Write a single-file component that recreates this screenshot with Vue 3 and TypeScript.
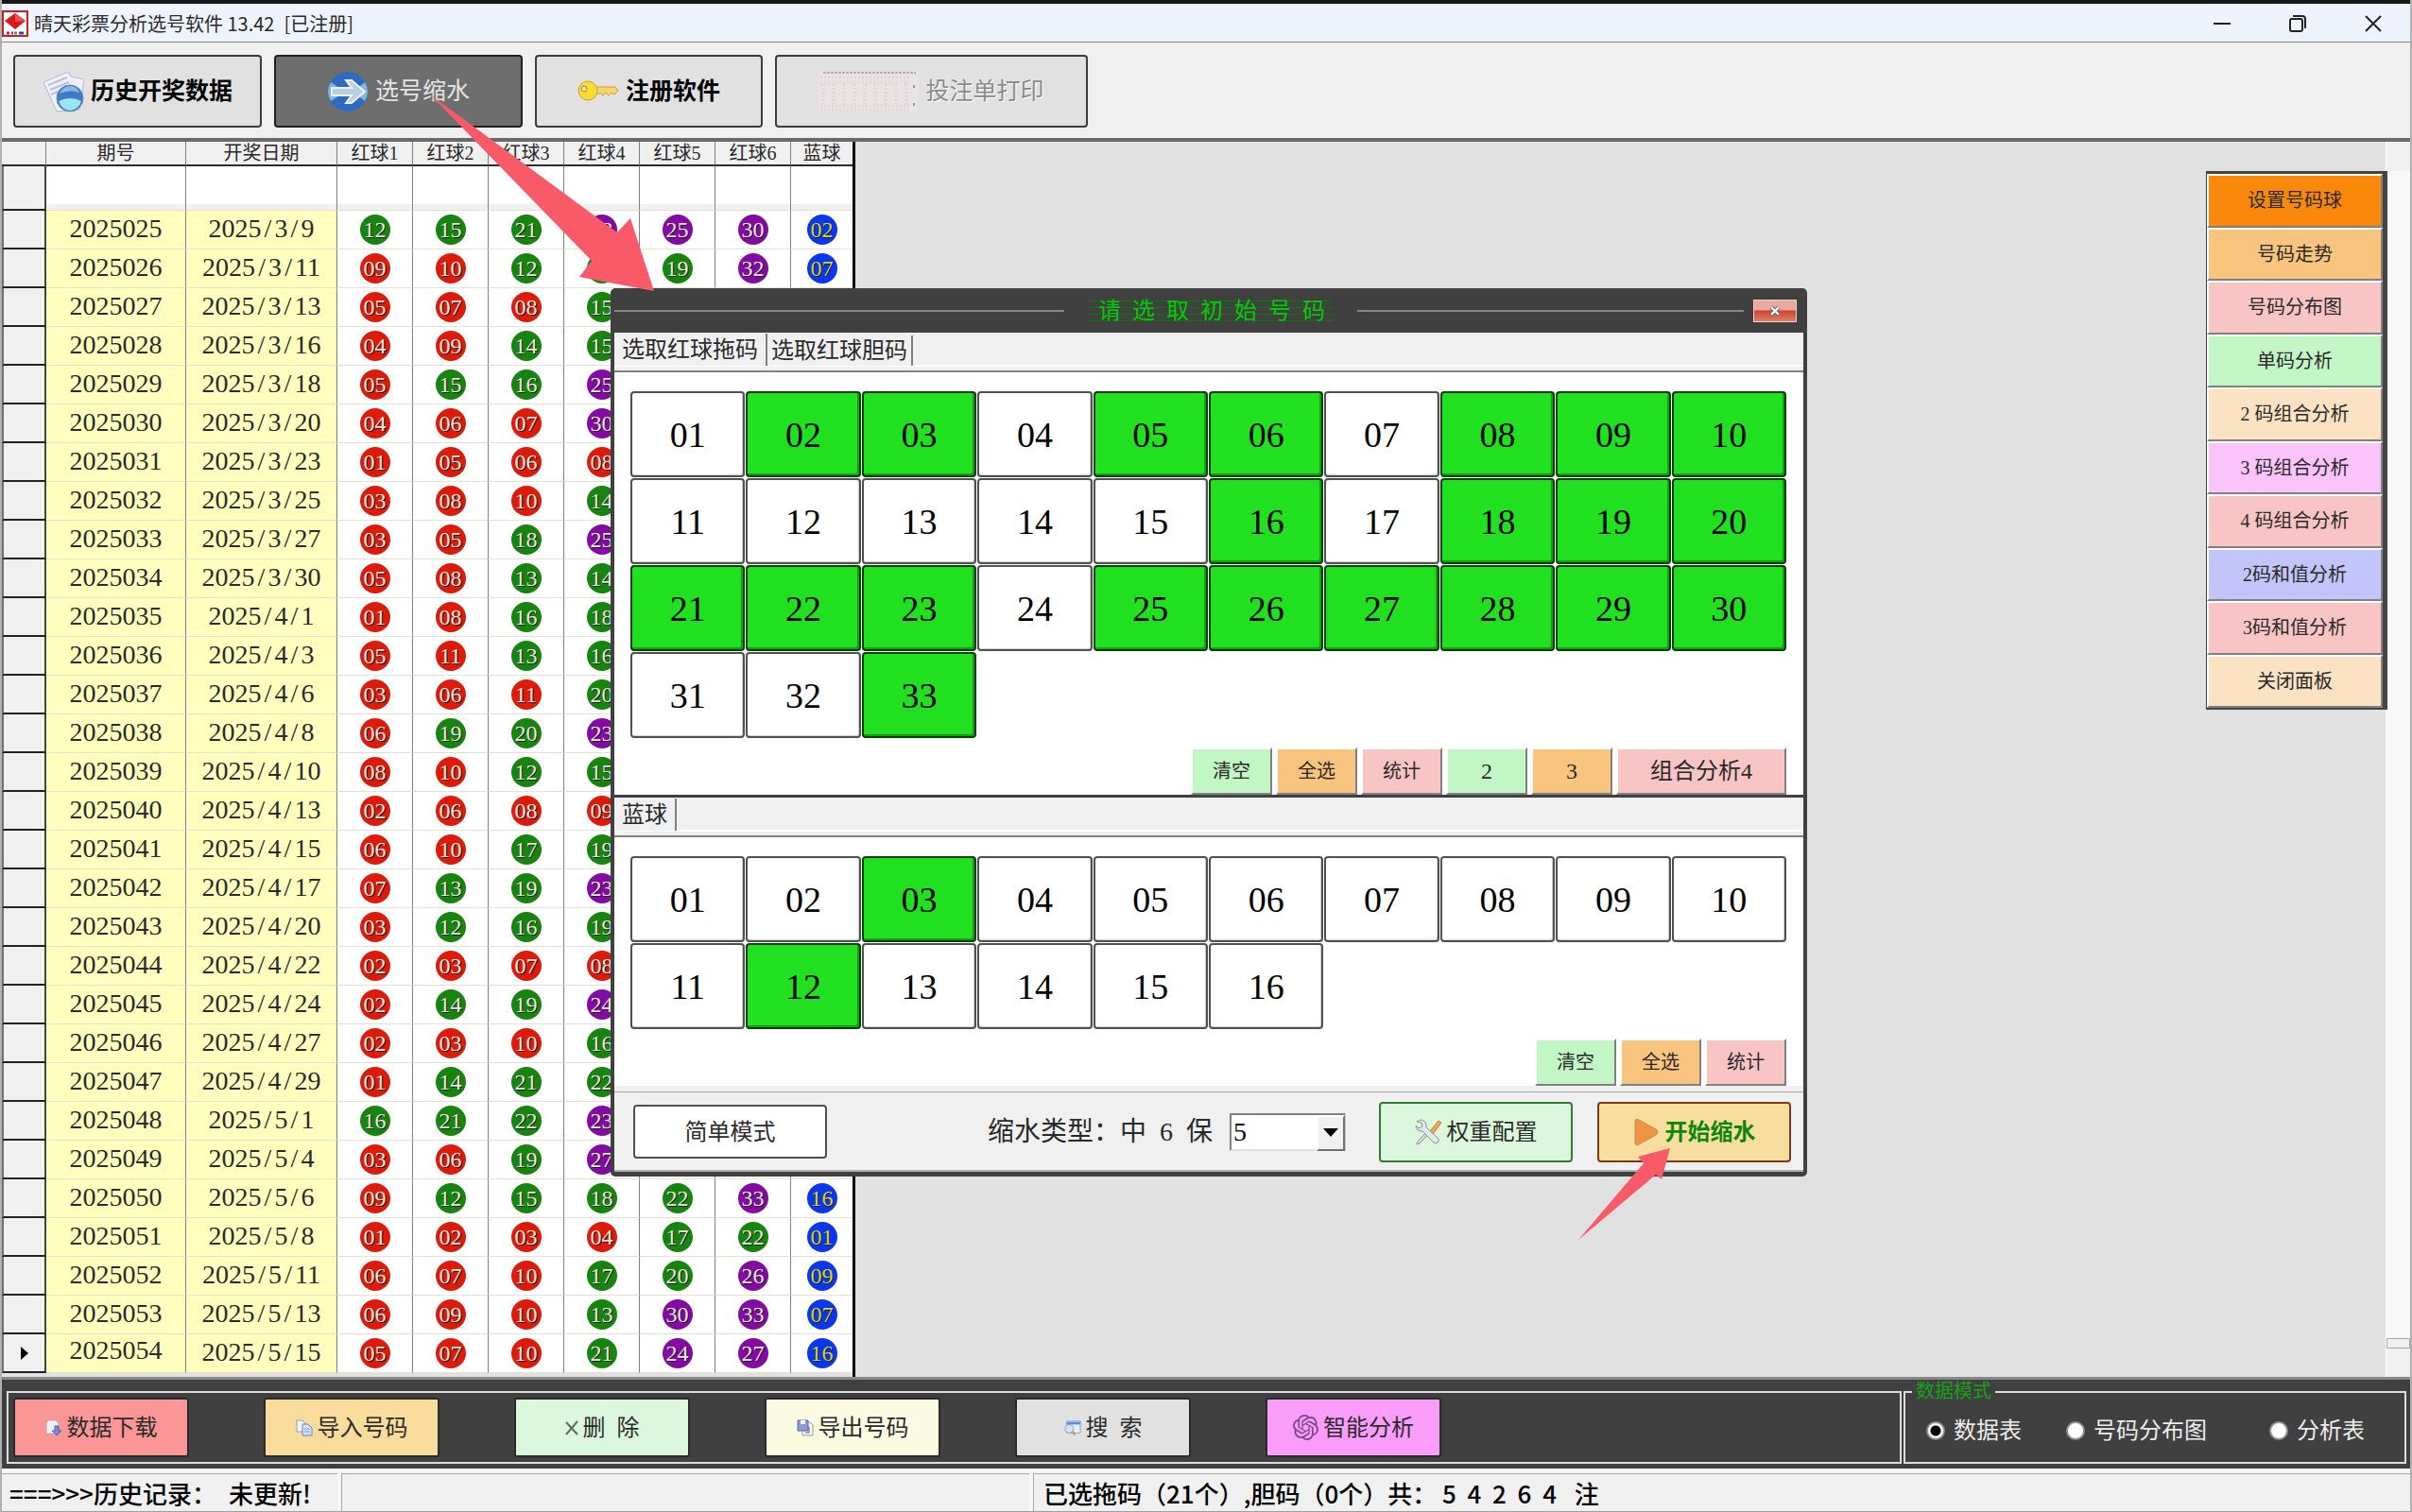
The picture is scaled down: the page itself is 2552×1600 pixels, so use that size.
<script setup lang="ts">
import { ref } from 'vue'

interface Draw {
  issue: string
  date: string
  reds: number[]
  blue?: number
}

const raw: [number, string, number[], number?][] = [
  [25, '3/9', [12, 15, 21, 23, 25, 30], 2],
  [26, '3/11', [9, 10, 12, 17, 19, 32], 7],
  [27, '3/13', [5, 7, 8, 15]],
  [28, '3/16', [4, 9, 14, 15]],
  [29, '3/18', [5, 15, 16, 25]],
  [30, '3/20', [4, 6, 7, 30]],
  [31, '3/23', [1, 5, 6, 8]],
  [32, '3/25', [3, 8, 10, 14]],
  [33, '3/27', [3, 5, 18, 25]],
  [34, '3/30', [5, 8, 13, 14]],
  [35, '4/1', [1, 8, 16, 18]],
  [36, '4/3', [5, 11, 13, 16]],
  [37, '4/6', [3, 6, 11, 20]],
  [38, '4/8', [6, 19, 20, 23]],
  [39, '4/10', [8, 10, 12, 15]],
  [40, '4/13', [2, 6, 8, 9]],
  [41, '4/15', [6, 10, 17, 19]],
  [42, '4/17', [7, 13, 19, 23]],
  [43, '4/20', [3, 12, 16, 19]],
  [44, '4/22', [2, 3, 7, 8]],
  [45, '4/24', [2, 14, 19, 24]],
  [46, '4/27', [2, 3, 10, 16]],
  [47, '4/29', [1, 14, 21, 22]],
  [48, '5/1', [16, 21, 22, 23]],
  [49, '5/4', [3, 6, 19, 27]],
  [50, '5/6', [9, 12, 15, 18, 22, 33], 16],
  [51, '5/8', [1, 2, 3, 4, 17, 22], 1],
  [52, '5/11', [6, 7, 10, 17, 20, 26], 9],
  [53, '5/13', [6, 9, 10, 13, 30, 33], 7],
  [54, '5/15', [5, 7, 10, 21, 24, 27], 16],
]
const draws: Draw[] = raw.map(([n, d, reds, blue]) => ({
  issue: `20250${n}`,
  date: `2025/${d}`,
  reds,
  blue,
}))

const pad = (n: number) => String(n).padStart(2, '0')
const tone = (n: number) => (n < 12 ? 'red' : n < 23 ? 'green' : 'purple')

const redPicked = ref(new Set([2, 3, 5, 6, 8, 9, 10, 16, 18, 19, 20, 21, 22, 23, 25, 26, 27, 28, 29, 30, 33]))
const bluePicked = ref(new Set([3, 12]))
function toggle(set: Set<number>, n: number) {
  if (set.has(n)) set.delete(n)
  else set.add(n)
}

const sideItems: [string, string][] = [
  ['设置号码球', 'orange'],
  ['号码走势', 'amber'],
  ['号码分布图', 'pink'],
  ['单码分析', 'mint'],
  ['2 码组合分析', 'cream'],
  ['3 码组合分析', 'violet'],
  ['4 码组合分析', 'pink'],
  ['2码和值分析', 'blue'],
  ['3码和值分析', 'pink'],
  ['关闭面板', 'cream'],
]
const modes = ['数据表', '号码分布图', '分析表']
const mode = ref('数据表')
const keep = ref('5')
</script>

<template>
  <div class="app">
    <header class="titlebar">
      <svg class="logo" viewBox="0 0 28 28">
        <rect x="1" y="1" width="26" height="26" fill="#fff" stroke="#c3231c" stroke-width="2" />
        <path d="M14 3 25 11 14 20 3 11z" fill="#d8181c" />
        <path d="M14 3 25 11 14 12z" fill="#f0504e" />
        <path d="M5 24h3M10 24h2" stroke="#c4167a" stroke-width="3" />
        <path d="M13 24h3" stroke="#38a838" stroke-width="3" />
        <path d="M18 24h5" stroke="#3a3ad0" stroke-width="3" />
      </svg>
      <h1>晴天彩票分析选号软件 13.42&ensp;[已注册]</h1>
      <div class="winctl">
        <button aria-label="最小化"><svg viewBox="0 0 20 20"><path d="M1 10h18" /></svg></button>
        <button aria-label="还原">
          <svg viewBox="0 0 20 20"><rect x="2" y="5" width="13" height="13" rx="2" /><path d="M5 2h10q3 0 3 3v10" /></svg>
        </button>
        <button aria-label="关闭"><svg viewBox="0 0 20 20"><path d="M2 2l16 16M18 2 2 18" /></svg></button>
      </div>
    </header>

    <nav class="toolbar">
      <button class="tool wide">
        <svg class="ico-l" viewBox="0 0 44 44">
          <path d="M1 12 27 1l3 5 14 3-5 32-24 2z" fill="#eef0fa" stroke="#b4b8d4" />
          <path d="M6 15l20-8M8 20l20-8M9 25l14-6" stroke="#b9bfe0" stroke-width="2" />
          <circle cx="29" cy="29" r="14" fill="#3f7cc4" stroke="#6a86b8" />
          <path d="M17 32q12-6 24 0-3 9-12 10-9-1-12-10z" fill="#9ce6f2" />
          <path d="M18 24q4-8 12-8 7 1 9 7-10-4-21 1z" fill="#8ab8e8" />
        </svg>
        <span>历史开奖数据</span>
      </button>
      <button class="tool wide active">
        <svg class="ico-l" viewBox="0 0 44 44">
          <circle cx="22" cy="22" r="21" fill="#2d6cc0" />
          <path d="M4 12 16 20v4L4 32q-6-10 0-20zM40 12 30 20v4l10 8q6-10 0-20z" fill="#7db9e6" />
          <path d="M5 18h21l-6-8h6l14 12-14 12h-6l6-8H5z" fill="#b9cfe2" stroke="#eef4fa" stroke-width="2" />
        </svg>
        <span>选号缩水</span>
      </button>
      <button class="tool mid">
        <svg class="ico-l" viewBox="0 0 44 44">
          <path d="M20 17h20l3 4-4 4-3-2-3 3-3-3-3 3-2-2h-5z" fill="#f6d66a" stroke="#c99a3a" />
          <circle cx="11" cy="21" r="10" fill="#fbdc30" stroke="#c9a03a" />
          <circle cx="7" cy="19" r="3" fill="#e8e0b8" stroke="#a88838" />
        </svg>
        <span>注册软件</span>
      </button>
      <button class="tool long" disabled>
        <svg class="ico-slip" viewBox="0 0 106 42">
          <rect width="106" height="42" fill="#e6e4e4" />
          <path d="M5 1h98" stroke="#b4b0b0" stroke-width="2" stroke-dasharray="3 1" />
          <path d="M2 6h94M2 11h94M2 36h94M2 40h94" stroke="#ecd2d2" stroke-width="3" stroke-dasharray="2 2" />
          <path d="M5 13v24M16 13v24M27 13v24M38 13v24M49 13v24M60 13v24M71 13v24M82 13v24M93 13v24" stroke="#ecd2d2" stroke-width="4" stroke-dasharray="2 2" />
          <path d="M101 14v3M101 33v3" stroke="#999" stroke-width="2" />
        </svg>
        <span>投注单打印</span>
      </button>
    </nav>

    <main class="work">
      <div class="history">
        <table>
          <colgroup>
            <col class="c-mark" /><col class="c-issue" /><col class="c-date" />
            <col v-for="i in 6" :key="i" class="c-ball" /><col class="c-blue" />
          </colgroup>
          <thead>
            <tr>
              <th></th><th>期号</th><th>开奖日期</th>
              <th v-for="i in 6" :key="i">红球{{ i }}</th>
              <th>蓝球</th>
            </tr>
          </thead>
          <tbody>
            <tr class="blank"><td class="mark"></td><td v-for="i in 9" :key="i"></td></tr>
            <tr v-for="(d, i) in draws" :key="d.issue" :class="{ current: i === draws.length - 1 }">
              <td class="mark">
                <svg v-if="i === draws.length - 1" viewBox="0 0 8 14"><path d="M0 0 8 7 0 14z" /></svg>
              </td>
              <td class="key issue">{{ d.issue }}</td>
              <td class="key">
                <template v-for="(p, k) in d.date.split('/')" :key="k"><span v-if="k" class="slash">/</span>{{ p }}</template>
              </td>
              <td v-for="k in 6" :key="k">
                <span v-if="d.reds[k - 1]" class="ball" :class="tone(d.reds[k - 1])">{{ pad(d.reds[k - 1]) }}</span>
              </td>
              <td><span v-if="d.blue" class="ball blue">{{ pad(d.blue) }}</span></td>
            </tr>
          </tbody>
        </table>
      </div>
      <div class="canvas"></div>
      <div class="scroll"><div class="scroll-top"></div><div class="track"></div><div class="thumb"></div><div class="scroll-end"></div></div>

      <aside class="side">
        <button v-for="[label, c] in sideItems" :key="label" :class="c">{{ label }}</button>
      </aside>

      <section class="dialog" role="dialog" aria-labelledby="dlg-title">
        <div class="dlg-head">
          <i class="rule rule-a"></i>
          <h2 id="dlg-title">请&ensp;选&ensp;取&ensp;初&ensp;始&ensp;号&ensp;码</h2>
          <i class="rule rule-b"></i>
          <button class="dlg-close" aria-label="关闭">
            <svg viewBox="0 0 16 16"><path d="M3 3l10 10M13 3 3 13" stroke="#6a6a70" stroke-width="6" /><path d="M3 3l10 10M13 3 3 13" stroke="#fff" stroke-width="3" /></svg>
          </button>
        </div>
        <div class="tabs">
          <button class="tab on">选取红球拖码</button>
          <button class="tab">选取红球胆码</button>
        </div>
        <div class="page">
          <div class="grid">
            <button v-for="n in 33" :key="n" class="num" :class="{ on: redPicked.has(n) }" @click="toggle(redPicked, n)">{{ pad(n) }}</button>
          </div>
          <div class="acts">
            <button class="mint">清空</button>
            <button class="amber">全选</button>
            <button class="pink">统计</button>
            <button class="mint big">2</button>
            <button class="amber big">3</button>
            <button class="pink big combo">组合分析4</button>
          </div>
        </div>
        <div class="tabs second">
          <button class="tab on">蓝球</button>
        </div>
        <div class="page">
          <div class="grid">
            <button v-for="n in 16" :key="n" class="num" :class="{ on: bluePicked.has(n) }" @click="toggle(bluePicked, n)">{{ pad(n) }}</button>
          </div>
          <div class="acts">
            <button class="mint">清空</button>
            <button class="amber">全选</button>
            <button class="pink">统计</button>
          </div>
        </div>
        <div class="dlg-foot">
          <button class="simple">简单模式</button>
          <label for="keep">缩水类型：中&ensp;6&ensp;保</label>
          <div class="combo-box">
            <select id="keep" v-model="keep"><option>5</option></select>
            <span class="drop"></span>
          </div>
          <button class="cfg">
            <svg viewBox="0 0 28 28">
              <path d="M16 13 25 2l3 2-9 12z" fill="#f0a850" stroke="#b87828" />
              <path d="M16 14 5 26l-3 1 1-3 11-12z" fill="#dcdce4" stroke="#8c8c98" />
              <path d="M2 3l5 1 1 4-4 2-3-3q0 6 7 6l12 12q3 2 5-1 1-2-1-4L12 9Q13 2 6 1z" fill="#e4e8ec" stroke="#84909c" />
            </svg>
            <span>权重配置</span>
          </button>
          <button class="start">
            <svg viewBox="0 0 28 30"><path d="M2 4q0-4 4-2l18 10q4 3 0 6L6 28q-4 2-4-2z" fill="#ee9440" stroke="#c68a48" /></svg>
            <span>开始缩水</span>
          </button>
        </div>
      </section>
    </main>

    <footer class="dock">
      <div class="dock-btns">
        <button class="d-red">
          <svg viewBox="0 0 18 18"><path d="M3 1h8l3 3v11H1V4z" fill="#f4eef6" stroke="#b8a8c0" /><path d="M10 7h4v5h3l-5 5-5-5h3z" fill="#7a86dc" stroke="#5a62b0" /></svg>
          <span>数据下载</span>
        </button>
        <button class="d-amber">
          <svg viewBox="0 0 18 18"><path d="M1 1h6l3 3v9H1z" fill="#f2f4fa" stroke="#8e9cc4" /><path d="M7 5h6l4 4v8H7z" fill="#d4e2f8" stroke="#6a80b8" /><path d="M9 10h6M9 13h6" stroke="#7c96cc" /></svg>
          <span>导入号码</span>
        </button>
        <button class="d-mint">
          <svg class="thin" viewBox="0 0 14 18"><path d="M1 3l12 13M13 2 1 16" stroke="#5c6c5c" stroke-width="2" fill="none" /></svg>
          <span>删&ensp;除</span>
        </button>
        <button class="d-cream">
          <svg viewBox="0 0 18 18"><path d="M9 3h5l3 3v11H6V3z" fill="#f6f6f6" stroke="#9a9a9a" /><path d="M1 1h11v11H1z" fill="#8c9ad8" stroke="#5864a8" /><path d="M4 1h5v4H4z" fill="#f4f4fc" /><path d="M13 8v6h-4" stroke="#4a5a9c" fill="none" /></svg>
          <span>导出号码</span>
        </button>
        <button class="d-grey">
          <svg viewBox="0 0 20 18"><path d="M3 1h16v14H3z" fill="#e4eefc" stroke="#7a9ad0" /><path d="M3 2h16v3H3z" fill="#5a8ee0" /><circle cx="6" cy="10" r="5" fill="#cfe4f6" stroke="#8a9cb0" /><path d="M9 13l4 4" stroke="#d89a3a" stroke-width="3" /></svg>
          <span>搜&ensp;索</span>
        </button>
        <button class="d-violet">
          <svg class="ai" viewBox="0 0 24 24"><path fill="#7a4a86" d="M22.28 9.82a5.98 5.98 0 0 0-.52-4.91 6.05 6.05 0 0 0-6.51-2.9A6.07 6.07 0 0 0 4.98 4.18a5.98 5.98 0 0 0-4 2.9 6.05 6.05 0 0 0 .74 7.1 5.98 5.98 0 0 0 .51 4.91 6.05 6.05 0 0 0 6.52 2.9A5.98 5.98 0 0 0 13.26 24a6.06 6.06 0 0 0 5.77-4.21 5.99 5.99 0 0 0 4-2.9 6.06 6.06 0 0 0-.75-7.07zm-9.02 12.61a4.48 4.48 0 0 1-2.88-1.04l.14-.08 4.78-2.76a.79.79 0 0 0 .39-.68v-6.74l2.02 1.17a.07.07 0 0 1 .04.05v5.58a4.5 4.5 0 0 1-4.49 4.5zM3.6 18.3a4.47 4.47 0 0 1-.54-3.01l.15.08 4.78 2.76a.77.77 0 0 0 .78 0l5.84-3.37v2.33a.08.08 0 0 1-.03.06L9.74 19.95a4.5 4.5 0 0 1-6.14-1.65zM2.34 7.9a4.49 4.49 0 0 1 2.37-1.98v5.68a.77.77 0 0 0 .39.68l5.81 3.35-2.02 1.17a.08.08 0 0 1-.07 0l-4.83-2.79A4.5 4.5 0 0 1 2.34 7.87zm16.6 3.85-5.84-3.38 2.02-1.16a.08.08 0 0 1 .07 0l4.83 2.79a4.49 4.49 0 0 1-.68 8.1v-5.68a.79.79 0 0 0-.4-.67zm2.01-3.02-.14-.09-4.77-2.78a.78.78 0 0 0-.79 0L9.41 9.23V6.9a.07.07 0 0 1 .03-.06l4.83-2.79a4.5 4.5 0 0 1 6.68 4.66zM8.31 12.86l-2.02-1.16a.08.08 0 0 1-.04-.06V6.07a4.5 4.5 0 0 1 7.38-3.45l-.14.08-4.78 2.76a.79.79 0 0 0-.4.68zm1.1-2.36L12 9l2.61 1.5v3L12 15l-2.6-1.5z" /></svg>
          <span>智能分析</span>
        </button>
      </div>
      <fieldset class="modes">
        <legend>数据模式</legend>
        <label v-for="m in modes" :key="m"><input v-model="mode" type="radio" name="mode" :value="m" />{{ m }}</label>
      </fieldset>
    </footer>

    <div class="status">
      <div class="s-a">===&gt;&gt;&gt;历史记录：&ensp;未更新!</div>
      <div class="s-b"></div>
      <div class="s-c">已选拖码（21个）,胆码（0个）共：&nbsp;5&nbsp;&nbsp;4&nbsp;&nbsp;2&nbsp;&nbsp;6&nbsp;&nbsp;4&nbsp;&ensp;注</div>
    </div>

    <svg class="pointers" viewBox="0 0 1400 1320" aria-hidden="true">
      <path transform="translate(-445 0)" d="M455 100 653 246 667 231 692 308 613 293 626 276z" />
      <path transform="translate(-445 0)" d="M1767 1215 1733 1224 1739 1231 1670 1312 1752 1243 1758 1248z" />
    </svg>
  </div>
</template>

<style>
body {
  margin: 0;
  background: #f0f0f0;
}
</style>

<style scoped>
.app {
  position: relative;
  display: flex;
  flex-direction: column;
  min-height: 100vh;
  box-sizing: border-box;
  border: solid #b0b0b0;
  border-width: 0 2px;
  background: #f0f0f0;
  color: #2a2a2a;
  font: 24px/1 'Liberation Serif', 'Noto Sans CJK SC', serif;
}
button {
  display: flex;
  align-items: center;
  justify-content: center;
  box-sizing: border-box;
  padding: 0;
  font: inherit;
  color: inherit;
  white-space: nowrap;
}
h1,
h2 {
  margin: 0;
  font-weight: normal;
}
.titlebar {
  display: flex;
  align-items: center;
  height: 41px;
  box-sizing: content-box;
  border-top: 4px solid #161616;
  box-shadow: inset 0 -1px #858585;
  background: #eff3fb;
}
.logo {
  width: 28px;
  height: 28px;
}
h1 {
  flex: 1;
  padding-left: 6px;
  font: 20px/40px 'Noto Sans CJK SC', sans-serif;
}
.winctl {
  display: flex;
  gap: 60px;
  padding-right: 29px;
}
.winctl button {
  border: 0;
  background: none;
}
.winctl svg {
  width: 20px;
  height: 20px;
  fill: none;
  stroke: #222;
  stroke-width: 2;
}
.toolbar {
  display: flex;
  gap: 13px;
  padding: 13px 12px 11px;
  border-bottom: 4px solid #6a6a6a;
}
.tool {
  gap: 7px;
  height: 77px;
  border: 2px solid #3c3c3c;
  border-radius: 4px;
  background: #e1e1e1;
  color: #000;
  font-size: 25px;
  font-weight: bold;
}
.wide { width: 263px; }
.mid { width: 241px; }
.long { width: 331px; }
.tool.active {
  background: #6e6e6e;
  border-color: #202020;
  color: #e4e4e4;
  font-weight: normal;
}
.tool:disabled {
  color: #8a8a8a;
  font-weight: normal;
  text-shadow: 1px 1px #fff;
}
.ico-l {
  width: 44px;
  height: 44px;
}
.ico-slip {
  width: 106px;
  height: 42px;
}

.work {
  position: relative;
  display: flex;
  flex: 1;
}
.history {
  border-right: 3px solid #000;
  background: #e1e1e1;
}
table {
  width: 900px;
  table-layout: fixed;
  border-collapse: separate;
  border-spacing: 0;
  background: #fff;
}
.c-mark { width: 47px; }
.c-issue { width: 148px; }
.c-date { width: 160px; }
.c-ball { width: 80px; }
.c-blue { width: 65px; }
th,
td {
  box-sizing: border-box;
  padding: 0;
  border-right: 1px solid #808080;
  text-align: center;
  vertical-align: middle;
}
th {
  height: 26px;
  background: #f0f0f0;
  border-bottom: 2px solid #2c2c2c;
  font-size: 20px;
  font-weight: normal;
  line-height: 20px;
}
th:last-child,
td:last-child {
  border-right: 0;
}
td {
  height: 41px;
  border-bottom: 1px solid #e6e2d0;
  font-size: 28px;
  line-height: 28px;
}
.blank td {
  height: 47px;
  background: linear-gradient(#fff 40px, #f0f0f0 40px);
}
td.mark,
.blank td.mark {
  background: #f0f0f0;
  border-bottom: 2px solid #222;
  border-right: 2px solid #444;
  border-left: 2px solid #707070;
}
.mark svg {
  display: block;
  width: 8px;
  height: 14px;
  margin: 0 auto;
}
td.key {
  padding-bottom: 2px;
  background: #ffffbe;
}
.current td.issue {
  padding-bottom: 6px;
}
.slash {
  display: inline-block;
  width: 14px;
}
.ball {
  display: block;
  width: 32px;
  height: 32px;
  margin: 0 auto;
  border-radius: 50%;
  color: #ece6dc;
  font-size: 24px;
  line-height: 32px;
  text-shadow: 1px 1px #1a1a1a;
}
.ball.red { background: #de1b0a; }
.ball.green { background: #16840e; }
.ball.purple { background: #840aa4; }
.ball.blue { background: #0a36ee; color: #d8d820; }
.canvas {
  flex: 1;
  background: #e1e1e1;
}
.scroll {
  display: flex;
  flex-direction: column;
  width: 25px;
  border-left: 1px solid #fff;
}
.scroll-top { height: 31px; }
.track {
  flex: 1;
  background: #f8f8f8;
}
.thumb {
  height: 9px;
  border: 1px solid #a8a8a8;
}
.scroll-end { height: 30px; }

.side {
  position: absolute;
  top: 31px;
  right: 24px;
  display: grid;
  grid-auto-rows: 1fr;
  width: 192px;
  height: 570px;
  box-sizing: border-box;
  border: solid #444;
  border-width: 3px 5px 2px 1px;
}
.side button,
.acts button {
  border: 2px solid;
  border-color: #fff #808080 #808080 #fff;
  font-size: 20px;
}
.orange { background: #fa880a; }
.amber { background: #f8c47e; }
.pink { background: #f8c4c4; }
.mint { background: #c2f6c4; }
.cream { background: #fbe2c2; }
.violet { background: #fac4fa; }
.side .blue { background: #c2c4fa; }

.dialog {
  position: absolute;
  left: 644px;
  top: 155px;
  width: 1266px;
  box-sizing: border-box;
  border: solid #404040;
  border-width: 0 4px 5px;
  border-radius: 5px;
  background: #f0f0f0;
}
.dlg-head {
  display: flex;
  align-items: center;
  height: 47px;
  background: #404040;
}
.rule {
  height: 2px;
  background: #868686;
}
.rule-a { width: 476px; }
.rule-b { flex: 1; }
h2 {
  margin: 0 26px;
  padding: 0 8px 0 10px;
  color: #06c806;
  font-size: 24px;
  line-height: 24px;
  background: linear-gradient(#087808 1px, transparent 1px) 0 1px / 100% 7px;
}
.dlg-close {
  width: 46px;
  height: 24px;
  margin: 0 7px 0 10px;
  border: 1px solid #f0d0cc;
  background: linear-gradient(#eaa8a0 45%, #c8452c 50%, #dc8070);
}
.dlg-close svg {
  width: 12px;
  height: 12px;
}
.tabs {
  display: flex;
  align-items: flex-start;
  height: 42px;
  box-sizing: border-box;
  border-bottom: 2px solid #808080;
  background: linear-gradient(#fff, #fff) 0 34px / 100% 2px no-repeat;
}
.tabs.second {
  height: 45px;
  border-top: 3px solid #404040;
}
.tab {
  height: 32px;
  margin-top: 3px;
  padding: 0 4px;
  border: 0;
  border-right: 2px solid #808080;
  background: #f0f0f0;
}
.tab.on {
  height: 34px;
  margin-top: 1px;
  padding: 0 8px;
}
.page {
  padding: 20px 18px 0 17px;
  background: #fff;
}
.grid {
  display: grid;
  grid-template-columns: repeat(10, 1fr);
  gap: 1px;
}
.num {
  height: 91px;
  border: 2px solid #505050;
  border-radius: 4px;
  background: #fff;
  box-shadow: inset -1px -1px #d0d0d0;
  color: #000;
  font-size: 38px;
}
.num.on {
  background: #20e020;
  border-color: #063c06;
  box-shadow: inset -2px -2px #10a010;
}
.acts {
  display: flex;
  justify-content: flex-end;
  gap: 4px;
  padding-top: 10px;
}
.acts button {
  width: 86px;
  height: 50px;
}
.acts .big { font-size: 24px; }
.acts .combo { width: 180px; }
.dlg-foot {
  display: flex;
  align-items: center;
  height: 91px;
  box-sizing: border-box;
  padding: 8px 13px 0 20px;
  background: linear-gradient(#a8a8a8, #a8a8a8) 0 6px / 100% 1px no-repeat;
  border-bottom: 2px solid #b0b0b0;
}
.simple,
.cfg,
.start {
  width: 205px;
  height: 64px;
  border: 2px solid #505050;
  border-radius: 4px;
}
.simple {
  height: 57px;
  background: #fff;
}
.dlg-foot label {
  margin: 0 18px 0 auto;
  font-size: 28px;
}
.combo-box {
  position: relative;
  width: 123px;
  height: 40px;
}
select {
  width: 100%;
  height: 100%;
  padding: 0 2px;
  border: 2px solid #808080;
  border-right-color: #c8c8c8;
  border-bottom-color: #e0e0e0;
  border-radius: 0;
  background: #fff;
  font: 28px/36px 'Liberation Serif', serif;
  appearance: none;
}
.drop {
  position: absolute;
  top: 2px;
  right: 1px;
  display: flex;
  align-items: center;
  justify-content: center;
  width: 26px;
  height: 34px;
  border: 2px solid;
  border-color: #fff #707070 #707070 #fff;
  background: #f0f0f0;
  pointer-events: none;
}
.drop::after {
  content: '';
  border: 8px solid transparent;
  border-top: 9px solid #000;
  border-bottom: 0;
}
.cfg,
.start {
  gap: 6px;
}
.cfg {
  margin: 0 26px 0 35px;
  border-color: #2e7c34;
  background: #dbf8dc;
}
.start {
  border-color: #7c3a1c;
  background: #f8de9e;
  color: #0c860c;
  font-size: 24px;
  font-weight: bold;
}
.cfg svg,
.start svg {
  width: 28px;
  height: 30px;
}

.dock {
  display: flex;
  height: 97px;
  box-sizing: border-box;
  padding: 12px 4px 5px 5px;
  border-top: 3px solid #888;
  background: #404040;
}
.dock-btns {
  flex: 1;
  display: flex;
  align-items: center;
  gap: 79px;
  height: 77px;
  box-sizing: border-box;
  padding-left: 5px;
  border: 2px solid #dcdcdc;
}
.dock-btns button {
  gap: 5px;
  width: 186px;
  height: 63px;
  border: 2px solid;
  border-radius: 3px;
}
.dock svg {
  width: 18px;
  height: 18px;
}
.dock svg.thin { width: 14px; }
.dock svg.ai {
  width: 27px;
  height: 27px;
}
.d-red { background: #fa9696; border-color: #a82424; }
.d-amber { background: #f8dc9c; border-color: #b06828; }
.d-mint { background: #dcf8dc; border-color: #2c8834; }
.d-cream { background: #fafae0; border-color: #b07838; }
.d-grey { background: #e1e1e1; border-color: #181818; }
.d-violet { background: #fa9cfa; border-color: #9020a0; }
.modes {
  position: relative;
  display: flex;
  align-items: center;
  width: 532px;
  height: 77px;
  box-sizing: border-box;
  margin: 0 0 0 2px;
  padding: 6px 42px 0 22px;
  border: 2px solid #dcdcdc;
  color: #ececec;
}
legend {
  position: absolute;
  top: -14px;
  left: 7px;
  padding: 0 4px;
  background: #404040;
  color: #18a018;
  font-size: 20px;
  line-height: 24px;
}
.modes label {
  display: flex;
  align-items: center;
}
.modes label + label { margin-left: 47px; }
.modes label:last-child { margin-left: auto; }
.modes input {
  width: 20px;
  height: 20px;
  margin: 0 9px 0 0;
  border: 2px solid #909090;
  border-radius: 50%;
  background: #fff;
  appearance: none;
}
.modes input:checked {
  background: radial-gradient(#000 5px, #fff 6px);
}
.status {
  display: flex;
  height: 46px;
  box-sizing: border-box;
  padding-top: 5px;
  border-bottom: 1px solid #a0a0a0;
  background: #f6f6f6;
  color: #000;
  font: 500 26px/40px 'Noto Sans CJK SC', sans-serif;
}
.status div {
  box-sizing: border-box;
  border-top: 1px solid #a8a8a8;
  background: #f0f0f0;
  white-space: nowrap;
}
.s-a {
  width: 355px;
  padding-left: 8px;
}
.status .s-b,
.status .s-c {
  margin-left: 4px;
  border-left: 1px solid #a8a8a8;
}
.s-b { width: 728px; }
.s-c {
  flex: 1;
  padding-left: 10px;
}
.pointers {
  position: absolute;
  top: 0;
  left: 443px;
  width: 1400px;
  height: 1320px;
  fill: #f85a68;
  pointer-events: none;
}
</style>
